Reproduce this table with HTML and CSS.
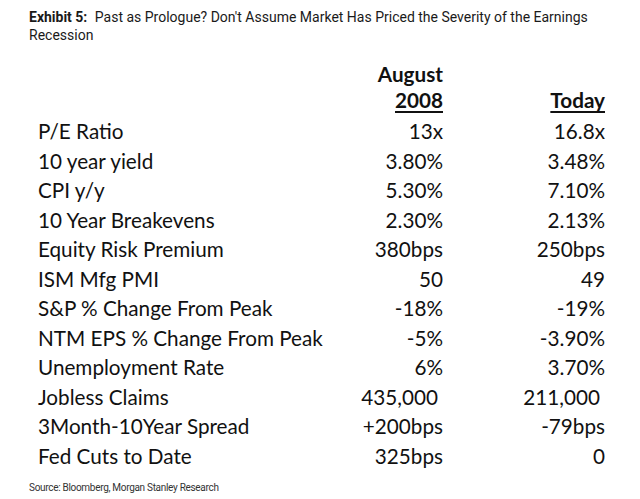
FILE: index.html
```html
<!DOCTYPE html>
<html>
<head>
<meta charset="utf-8">
<link rel="stylesheet" href="styles.css">
</head>
<body>
<div class="page">
  <h1 class="title"><b class="tag">Exhibit 5:</b> Past as Prologue? Don't Assume Market Has Priced the Severity of the Earnings Recession</h1>
  <div class="table">
    <div class="cell head"></div><div class="cell num head">August</div><div class="cell num head"></div>
    <div class="cell head head2"></div><div class="cell num head head2"><u>2008</u></div><div class="cell num head head2"><u>Today</u></div>
    <div class="cell label">P/E Ratio</div><div class="cell num">13x</div><div class="cell num">16.8x</div>
    <div class="cell label">10 year yield</div><div class="cell num">3.80%</div><div class="cell num">3.48%</div>
    <div class="cell label">CPI y/y</div><div class="cell num">5.30%</div><div class="cell num">7.10%</div>
    <div class="cell label">10 Year Breakevens</div><div class="cell num">2.30%</div><div class="cell num">2.13%</div>
    <div class="cell label">Equity Risk Premium</div><div class="cell num">380bps</div><div class="cell num">250bps</div>
    <div class="cell label">ISM Mfg PMI</div><div class="cell num">50</div><div class="cell num">49</div>
    <div class="cell label">S&amp;P % Change From Peak</div><div class="cell num">-18%</div><div class="cell num">-19%</div>
    <div class="cell label">NTM EPS % Change From Peak</div><div class="cell num">-5%</div><div class="cell num">-3.90%</div>
    <div class="cell label">Unemployment Rate</div><div class="cell num">6%</div><div class="cell num">3.70%</div>
    <div class="cell label">Jobless Claims</div><div class="cell num pad">435,000</div><div class="cell num pad">211,000</div>
    <div class="cell label">3Month-10Year Spread</div><div class="cell num">+200bps</div><div class="cell num">-79bps</div>
    <div class="cell label">Fed Cuts to Date</div><div class="cell num">325bps</div><div class="cell num">0</div>
  </div>
  <p class="source">Source: Bloomberg, Morgan Stanley Research</p>
</div>
</body>
</html>
```

FILE: styles.css
```css
html, body {
  margin: 0;
  padding: 0;
  background: #ffffff;
}
.page {
  width: 640px;
  height: 499px;
  padding: 8px 0 0 29px;
  box-sizing: border-box;
  overflow: hidden;
}
.title {
  margin: 0;
  width: 575px;
  font-family: Roboto, "Liberation Sans", sans-serif;
  font-weight: 400;
  font-size: 14px;
  line-height: 18px;
  letter-spacing: 0;
  color: #1a1a1a;
}
.tag {
  font-weight: 700;
  margin-right: 4px;
}
.table {
  display: grid;
  grid-template-columns: 260px 145px 162px;
  margin: 17px 0 0 9px;
  font-family: Lato, "Open Sans", sans-serif;
  font-size: 20.7px;
  color: #111111;
}
.cell {
  height: 29.5px;
  line-height: 29.5px;
  white-space: nowrap;
}
.num {
  text-align: right;
}
.head {
  font-weight: 700;
  height: 26px;
  line-height: 26px;
}
.head2 {
  height: 30px;
}
.head u {
  text-decoration-thickness: 2px;
  text-underline-offset: 3px;
}
.pad {
  padding-right: 5px;
}
.source {
  margin: 11px 0 0 0;
  font-family: Roboto, "Liberation Sans", sans-serif;
  font-size: 10px;
  letter-spacing: -0.3px;
  color: #333333;
}
```
